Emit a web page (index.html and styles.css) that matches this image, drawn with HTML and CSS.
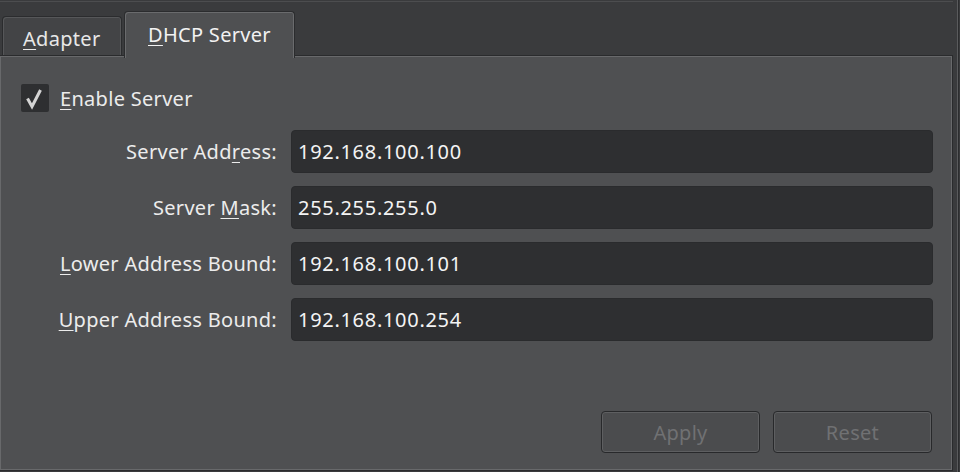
FILE: index.html
```html
<!DOCTYPE html>
<html>
<head>
<meta charset="utf-8">
<link rel="stylesheet" href="styles.css">
</head>
<body>
<div class="window">
  <div class="main">
    <div class="topline"></div>
    <div class="tabs">
      <div class="tab"><span class="u">A</span>dapter</div>
      <div class="tab active"><span class="u">D</span>HCP Server</div>
    </div>
    <div class="pane">
      <label class="check">
        <span class="box"><svg width="28" height="28" viewBox="0 0 28 28"><path d="M6.5 14.5 L11 22.5 L19.5 6" fill="none" stroke="#d4d4d4" stroke-width="3" stroke-linejoin="miter"/></svg></span>
        <span><span class="u">E</span>nable Server</span>
      </label>
      <div class="form">
        <div class="lbl">Server Add<span class="u">r</span>ess:</div>
        <div class="field">192.168.100.100</div>
        <div class="lbl">Server <span class="u">M</span>ask:</div>
        <div class="field">255.255.255.0</div>
        <div class="lbl"><span class="u">L</span>ower Address Bound:</div>
        <div class="field">192.168.100.101</div>
        <div class="lbl"><span class="u">U</span>pper Address Bound:</div>
        <div class="field">192.168.100.254</div>
      </div>
      <div class="spacer"></div>
      <div class="buttons">
        <div class="btn">Apply</div>
        <div class="btn">Reset</div>
      </div>
    </div>
  </div>
  <div class="edge"></div>
</div>
</body>
</html>
```
FILE: styles.css
```css
html, body {
  margin: 0;
  padding: 0;
  background: #3a3b3d;
}
body {
  font-family: "Noto Sans", "Open Sans", sans-serif;
  font-size: 20px;
  letter-spacing: 0.3px;
  color: #ececec;
  width: 960px;
  height: 472px;
  overflow: hidden;
}
.window {
  display: flex;
  height: 472px;
}
.main {
  width: 954px;
  display: flex;
  flex-direction: column;
}
.edge {
  margin-left: 3px;
  width: 1px;
  background: #5a5b5d;
  border-right: 1px solid #2c2d2f;
}
.topline {
  height: 1px;
  margin-top: 1px;
  background: #4c4d4f;
  width: 953px;
}
.u {
  text-decoration: underline;
  text-underline-offset: 3px;
  text-decoration-thickness: 1px;
}
.tabs {
  display: flex;
  align-items: flex-end;
  height: 53px;
  padding-left: 2px;
  gap: 2px;
}
.tab {
  box-sizing: border-box;
  width: 120px;
  height: 39px;
  background: #434446;
  border: 1px solid #2b2c2e;
  border-bottom: none;
  border-radius: 4px 4px 0 0;
  box-shadow: inset 1px 1px 0 #565759, inset -1px 0 0 #565759;
  padding: 8px 0 0 20px;
  line-height: 27px;
  color: #e8e8e8;
}
.tab.active {
  width: 171px;
  height: 47px;
  margin-bottom: -3px;
  background: #4f5052;
  box-shadow: inset 1px 1px 0 #6a6b6d, inset -1px 0 0 #6a6b6d;
  position: relative;
  z-index: 1;
  padding: 9px 0 0 23px;
  color: #f2f2f2;
}
.pane {
  box-sizing: border-box;
  height: 416px;
  margin-left: -1px;
  width: 954px;
  background: #4f5052;
  border: 1px solid #2a2b2d;
  box-shadow: inset 0 0 0 1px #68696b;
  display: flex;
  flex-direction: column;
  padding: 28px 20px 17px 21px;
}
.check {
  display: flex;
  align-items: center;
  gap: 11px;
  height: 28px;
}
.box {
  width: 28px;
  height: 28px;
  background: #2e2f31;
  border-radius: 2px;
  display: block;
}
.box svg { display: block; }
.form {
  margin-top: 18px;
  margin-left: -21px;
  display: grid;
  grid-template-columns: 277px 642px;
  column-gap: 14px;
  row-gap: 13px;
  grid-auto-rows: 43px;
}
.lbl {
  text-align: right;
  align-self: center;
}
.field {
  box-sizing: border-box;
  background: #2e2f31;
  border: 1px solid #2a2b2d;
  border-radius: 4px;
  padding-left: 6px;
  display: flex;
  align-items: center;
  letter-spacing: 0.7px;
  color: #f4f4f4;
}
.spacer { flex: 1; }
.buttons {
  display: flex;
  justify-content: flex-end;
  gap: 13px;
}
.btn {
  box-sizing: border-box;
  width: 159px;
  height: 42px;
  background: #4b4c4e;
  border: 1px solid #28292b;
  border-radius: 4px;
  box-shadow: inset 0 0 0 1px #5e5f61;
  color: #707173;
  display: flex;
  align-items: center;
  justify-content: center;
}
```
